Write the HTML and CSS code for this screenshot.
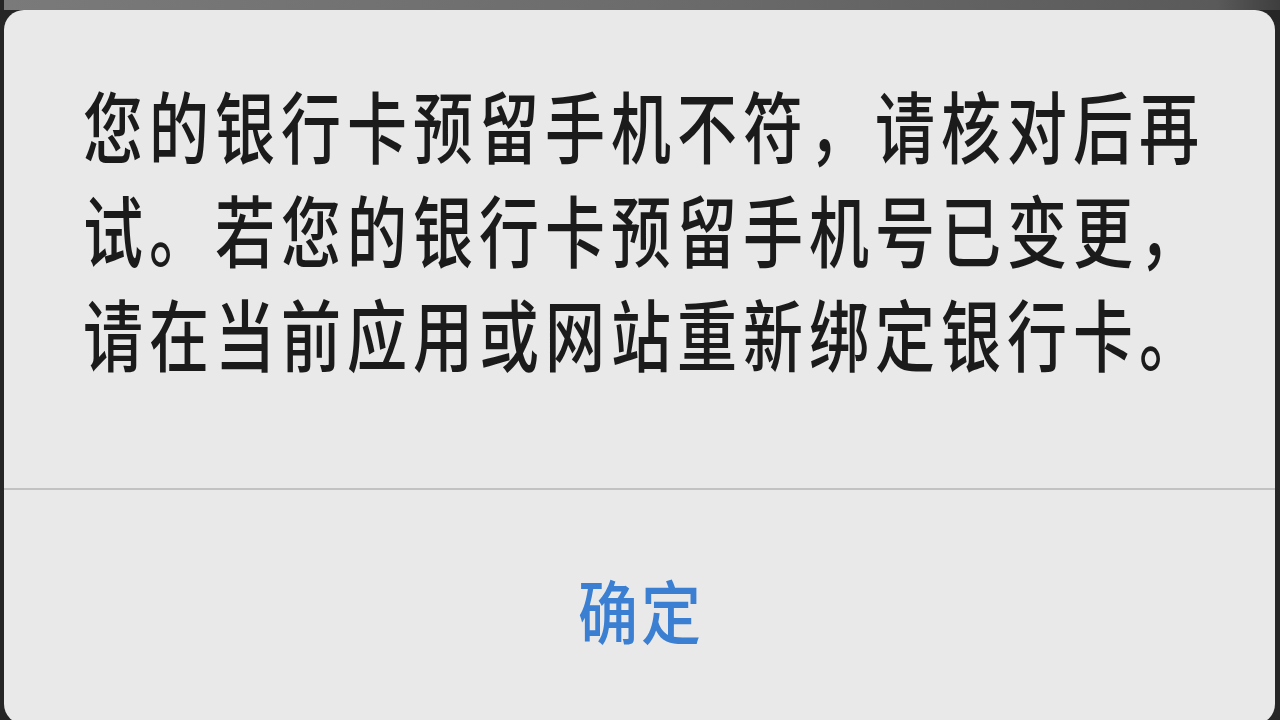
FILE: index.html
```html
<!DOCTYPE html>
<html lang="zh-CN">
<head>
<meta charset="utf-8">
<title>提示</title>
<link rel="stylesheet" href="styles.css">
</head>
<body>
<div class="screen">
  <div class="backdrop"></div>
  <div class="alert">
    <div class="message">
      <p class="message-text">您的银行卡预留手机不符，请核对后再试。若您的银行卡预留手机号已变更，请在当前应用或网站重新绑定银行卡。</p>
    </div>
    <div class="divider"></div>
    <div class="actions">
      <span class="confirm">确定</span>
    </div>
  </div>
</div>
</body>
</html>
```

FILE: styles.css
```css
html, body {
  margin: 0;
  padding: 0;
}
body {
  width: 1280px;
  height: 720px;
  overflow: hidden;
  background: #262626;
  font-family: "Noto Sans CJK SC", "Noto Sans", sans-serif;
}
.screen {
  display: flex;
  flex-direction: column;
  width: 1280px;
  height: 720px;
}
.backdrop {
  height: 10px;
  flex: none;
  margin-left: 4px;
  background: linear-gradient(90deg, #7a7a7a, #6c6c6c 50%, #5a5a5a 95%, #3e3e3e);
}
.alert {
  flex: none;
  margin: 0 5px 0 4px;
  height: 714px;
  background: #e9e9e9;
  border-radius: 20px;
  display: flex;
  flex-direction: column;
  overflow: hidden;
}
.message {
  height: 478px;
  box-sizing: border-box;
  padding: 62px 0 0 79px;
  flex: none;
}
.message-text {
  margin: 0;
  width: 1125px;
  font-size: 60px;
  letter-spacing: 6px;
  line-height: 80px;
  font-weight: 500;
  color: #1b1b1b;
  transform: scaleY(1.3);
  transform-origin: 0 0;
}
.divider {
  height: 2px;
  background: #c2c2c2;
  flex: none;
}
.actions {
  flex: 1;
  display: flex;
  justify-content: center;
  padding-top: 84px;
}
.confirm {
  font-size: 60px;
  letter-spacing: 3px;
  margin-right: -3px;
  line-height: 70px;
  height: 70px;
  font-weight: 500;
  color: #3b7fd2;
  transform: scaleY(1.15);
}
```
